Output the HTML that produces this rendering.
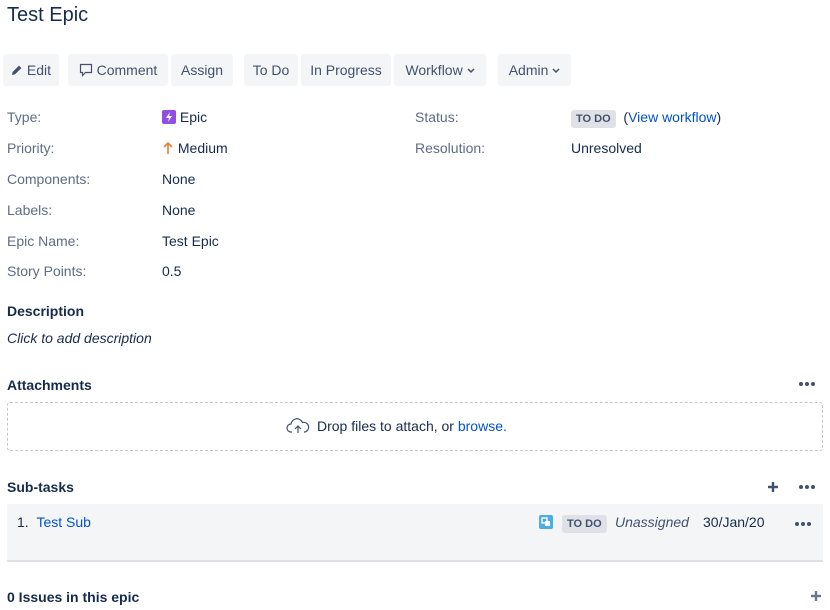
<!DOCTYPE html>
<html><head><style>
body{margin:0;width:830px;height:610px;overflow:hidden;background:#fff;font-family:"Liberation Sans",sans-serif;font-size:14px;color:#172b4d;position:relative}
.a{position:absolute;white-space:nowrap}
.btn{position:absolute;top:54px;height:32px;line-height:32px;background:#f4f5f7;border-radius:3px;color:#42526e;font-size:14px;text-align:center}
.l{position:absolute;left:7px;color:#5e6c84;transform:translateY(-50%)}
.v{position:absolute;left:162px;transform:translateY(-50%)}
.h{position:absolute;left:7px;font-weight:bold;font-size:14px;transform:translateY(-50%)}
.lz{font-size:11px;font-weight:bold;background:#dfe1e6;color:#42526e;border-radius:3px;padding:3px 5px}
.dots{position:absolute}
</style></head><body>
<svg width="0" height="0" style="position:absolute"><defs>
<g id="d"><circle cx="3" cy="3" r="2" fill="#42526e"/><circle cx="9" cy="3" r="2" fill="#42526e"/><circle cx="15" cy="3" r="2" fill="#42526e"/></g>
<path id="c" d="M1 1l3 3 3-3" fill="none" stroke="#42526e" stroke-width="1.5"/>
</defs></svg>
<div class="a" style="left:7px;top:4px;font-size:20px;">Test Epic</div>

<div class="btn" style="left:3px;width:56px"><svg width="12" height="12" viewBox="0 0 12 12" style="vertical-align:-1px"><path d="M1 11l.6-3L8 1.6l2.4 2.4L4 10.4z" fill="#42526e"/></svg> Edit</div>
<div class="btn" style="left:68px;width:100px"><svg width="14" height="14" viewBox="0 0 14 14" style="vertical-align:-2px"><path d="M1.5 1.5h11v8h-6l-3 3v-3h-2z" fill="none" stroke="#42526e" stroke-width="1.2"/></svg> Comment</div>
<div class="btn" style="left:171px;width:62px">Assign</div>
<div class="btn" style="left:244px;width:54px">To Do</div>
<div class="btn" style="left:301px;width:90px">In Progress</div>
<div class="btn" style="left:394px;width:92px">Workflow <svg width="8" height="6" style="vertical-align:1px"><use href="#c"/></svg></div>
<div class="btn" style="left:498px;width:73px">Admin <svg width="8" height="6" style="vertical-align:1px"><use href="#c"/></svg></div>

<div class="l" style="top:117px">Type:</div>
<div class="v" style="top:117px"><svg width="14" height="14" viewBox="0 0 14 14" style="vertical-align:-2px"><rect width="14" height="14" rx="2" fill="#904ee2"/><path d="M8 2L4 8h3l-1 4 4-6H7z" fill="#fff"/></svg> Epic</div>
<div class="l" style="top:148px">Priority:</div>
<div class="v" style="top:148px"><svg width="12" height="14" viewBox="0 0 12 14" style="vertical-align:-2px"><path d="M6 13V2M2 6l4-4 4 4" fill="none" stroke="#e97f33" stroke-width="1.6"/></svg> Medium</div>
<div class="l" style="top:179px">Components:</div><div class="v" style="top:179px">None</div>
<div class="l" style="top:210px">Labels:</div><div class="v" style="top:210px">None</div>
<div class="l" style="top:241px">Epic Name:</div><div class="v" style="top:241px">Test Epic</div>
<div class="l" style="top:271px">Story Points:</div><div class="v" style="top:271px">0.5</div>

<div class="l" style="left:415px;top:117px">Status:</div>
<div class="v" style="left:571px;top:117px"><span class="lz">TO DO</span> &nbsp;(<span style="color:#0052cc">View workflow</span>)</div>
<div class="l" style="left:415px;top:148px">Resolution:</div>
<div class="v" style="left:571px;top:148px">Unresolved</div>

<div class="h" style="top:311px">Description</div>
<div class="a" style="left:7px;top:338px;transform:translateY(-50%);font-style:italic">Click to add description</div>

<div class="h" style="top:385px">Attachments</div>
<svg class="dots" style="left:798px;top:381px" width="18" height="6"><use href="#d"/></svg>
<div class="a" style="left:7px;top:402px;width:814px;height:47px;border:1px dashed #c1c7d0;border-radius:3px"></div>
<svg class="a" style="left:286px;top:417px" width="24" height="18" viewBox="0 0 24 18"><path d="M6 15H5a4 4 0 0 1 0-8 6 6 0 0 1 11.5-1.5A4.5 4.5 0 0 1 19 15h-1M12 16V9m-3 3l3-3 3 3" fill="none" stroke="#42526e" stroke-width="1.2"/></svg>
<div class="a" style="left:317px;top:426px;transform:translateY(-50%)">Drop files to attach, or <span style="color:#0052cc">browse.</span></div>

<div class="h" style="top:487px">Sub-tasks</div>
<svg class="a" style="left:767px;top:481px" width="12" height="12"><path d="M6 1v10M1 6h10" stroke="#42526e" stroke-width="2.4"/></svg>
<svg class="dots" style="left:798px;top:484px" width="18" height="6"><use href="#d"/></svg>
<div class="a" style="left:7px;top:504px;width:816px;height:56px;background:#f4f5f7;border-bottom:2px solid #dfe1e6"></div>
<div class="a" style="left:17px;top:522px;transform:translateY(-50%)">1. &nbsp;<span style="color:#0052cc">Test Sub</span></div>
<svg class="a" style="left:539px;top:515px" width="14" height="14" viewBox="0 0 14 14"><rect width="14" height="14" rx="2" fill="#4bade8"/><rect x="3" y="3" width="5" height="5" fill="none" stroke="#fff" stroke-width="1.4"/><rect x="6" y="6" width="5" height="5" fill="#fff"/></svg>
<div class="a" style="left:562px;top:522px;transform:translateY(-50%)"><span class="lz">TO DO</span></div>
<div class="a" style="left:615px;top:522px;transform:translateY(-50%);font-style:italic;color:#42526e">Unassigned</div>
<div class="a" style="left:703px;top:522px;transform:translateY(-50%)">30/Jan/20</div>
<svg class="dots" style="left:794px;top:521px" width="18" height="6"><use href="#d"/></svg>

<div class="h" style="top:597px">0 Issues in this epic</div>
<svg class="a" style="left:810px;top:590px" width="12" height="12"><path d="M6 1v10M1 6h10" stroke="#6b778c" stroke-width="2.4"/></svg>
</body></html>
